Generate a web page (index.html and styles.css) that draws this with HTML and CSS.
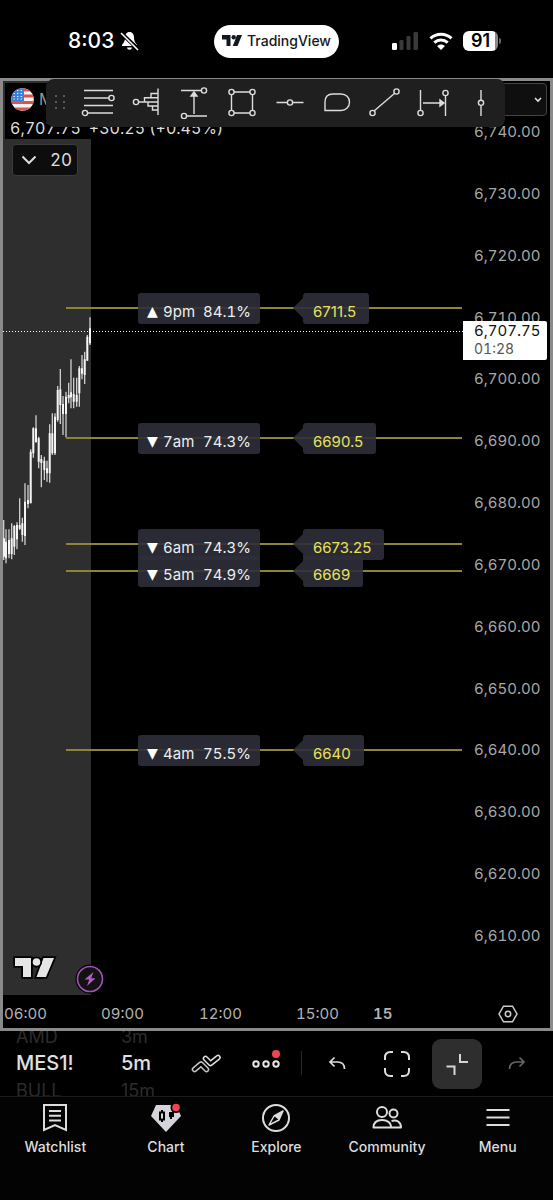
FILE: index.html
```html
<!doctype html>
<html lang="en">
<head>
<meta charset="utf-8">
<meta name="viewport" content="width=device-width, initial-scale=1">
<title>MES1! 5m</title>
<link rel="stylesheet" href="styles.css">
</head>
<body>
<header class="status">
  <div class="status-left">
    <span class="clock">8:03</span>
    <svg width="20" height="20" viewBox="0 0 20 20">
      <path fill="#fff" d="M9.500 1C6.500 1 5 3.500 5 6.500c0 3.500-1 5-3 7.200V15h15v-1.300c-2-2.200-3-3.700-3-7.200C14 3.500 12.500 1 9.500 1zM7 16.500h5c-.3 1.500-1.200 2.200-2.500 2.200S7.300 18 7 16.500z"/>
      <path stroke="#000" stroke-width="4" d="M1 2l17 16"/>
      <path stroke="#fff" stroke-width="1.600" d="M1 2l17 17"/>
    </svg>
  </div>
  <div class="island">
    <svg width="20" height="12" viewBox="0 0 20 12">
      <path fill="#131722" d="M0 0h8.500v11H4.500V4.500H0zM15 0h5l-4.500 11h-4.700z"/>
      <circle fill="#131722" cx="11.700" cy="2.300" r="2.200"/>
    </svg>
    <span>TradingView</span>
  </div>
  <div class="status-right">
    <svg width="27" height="18" viewBox="0 0 27 18">
      <rect x="0" y="11" width="5" height="7" rx="1.300" fill="#fff"/>
      <rect x="7.500" y="8" width="4" height="10" rx="1.300" fill="#3a3a3c"/>
      <rect x="14.500" y="4" width="4" height="14" rx="1.300" fill="#3a3a3c"/>
      <rect x="21.500" y="0" width="4.500" height="18" rx="1.300" fill="#3a3a3c"/>
    </svg>
    <svg width="24" height="18" viewBox="0 0 24 18" fill="none" stroke="#fff" stroke-width="3">
      <path d="M1.500 6.300c6-5.500 15-5.500 21 0"/>
      <path d="M5.300 10.700c4-3.700 9.400-3.700 13.400 0"/>
      <path fill="#fff" stroke="none" d="M12 18l-4-4c2.300-2.100 5.700-2.100 8 0z"/>
    </svg>
    <div class="battery">91</div>
  </div>
</header>

<main class="frame">
  <div class="chart">
    <section class="plot">
      <svg class="canvas" width="100%" height="100%">
        <rect class="session" x="0" y="0" width="88" height="100%"/>
        <!-- candles: wicks, then bodies -->
        <g transform="translate(-3 209) scale(.33333)" stroke="#f4f4f4">
          <path class="wick" d="M11 690V810M18 718V820M27 718V805M35 700V808M43 705V795M51 697V778M59 625V720M67 683V755M75 580V765M84 585V655M92 478V640M100 412V503M108 376V458M116 440V535M124 495V592M133 500V570M141 512V575M149 403V578M157 370V495M165 370V495M173 288V395M181 237V402M189 318V435M198 305V442M206 278V340M213 208V355M221 263V355M230 263V350M238 228V350M246 195V268M254 185V282M262 135V212M270 82V165"/>
          <path class="body" d="M12 745V800M18 755V805M27 750V792M35 745V792M43 708V770M51 705V748M59 705V716M67 700V735M75 635V738M84 630V642M92 485V640M100 415V490M108 415V456M116 445V515M124 507V519M133 512V540M141 535V550M149 430V550M157 430V490M165 380V490M173 300V390M181 298V345M189 342V372M198 320V372M206 315V325M213 307V322M221 312V335M230 315V335M238 235V310M246 235V251M254 208V255M262 140V212M270 115V160"/>
        </g>
        <path class="last" d="M0 250.500H2000"/>
      </svg>

      <div class="level" style="top:212px"><span class="tag"><i>▲</i><b>9pm</b>84.1%</span><span class="flag">6711.5</span></div>
      <div class="level" style="top:342px"><span class="tag"><i>▼</i><b>7am</b>74.3%</span><span class="flag">6690.5</span></div>
      <div class="level" style="top:448px"><span class="tag"><i>▼</i><b>6am</b>74.3%</span><span class="flag">6673.25</span></div>
      <div class="level" style="top:475px"><span class="tag"><i>▼</i><b>5am</b>74.9%</span><span class="flag">6669</span></div>
      <div class="level" style="top:654px"><span class="tag"><i>▼</i><b>4am</b>75.5%</span><span class="flag">6640</span></div>

      <div class="legend">
        <div class="symbol-row">
          <svg width="23" height="23" viewBox="0 0 23 23">
            <clipPath id="round"><circle cx="11.500" cy="11.500" r="11.300"/></clipPath>
            <g clip-path="url(#round)">
              <path fill="#f4f4f4" d="M0 0h23v23H0z"/>
              <path stroke="#e0524f" stroke-width="3" d="M0 2h23M0 8h23M0 14.500h23M0 21h23"/>
              <path fill="#3d7fd9" d="M0 0h13v13H0z"/>
              <path stroke="#fff" stroke-width="1.200" stroke-dasharray="1.200 2.400" d="M2.500 2.500h10M2.500 5.500h10M2.500 8.500h10M2.500 11h10"/>
            </g>
          </svg>
          <span>MES1!</span>
        </div>
        <div class="quote"><span>6,707.75</span><span>+30.25 (+0.45%)</span></div>
      </div>
      <button class="indicators" type="button">
        <svg width="16" height="10" viewBox="0 0 16 10" fill="none" stroke="#ddd" stroke-width="2"><path d="M1.500 1.500L8 8l6.500-6.500"/></svg>
        20
      </button>

      <svg class="tv" width="44" height="26" viewBox="0 0 44 26">
        <g fill="#e6e6e6" stroke="#000" stroke-width="3.500" paint-order="stroke">
          <path d="M2 3h16v19h-8V11H2zM30.500 3H41l-8 19h-9.500z"/>
          <circle cx="23.500" cy="7" r="3.800"/>
        </g>
      </svg>
      <svg class="bolt" width="30" height="30" viewBox="0 0 30 30">
        <circle cx="15" cy="15" r="14.500" fill="#000"/>
        <circle cx="15" cy="15" r="12.500" fill="#121212" stroke="#a052b8" stroke-width="1.600"/>
        <path fill="#b05cc8" d="M18.500 8L9.500 15.500h4.700L12 22l8.500-7.700h-4.300z"/>
      </svg>
    </section>

    <aside class="scale">
      <button class="currency" type="button" aria-label="Currency">
        <svg width="8" height="6" viewBox="0 0 8 6" fill="none" stroke="#e0e0e0" stroke-width="1.600"><path d="M1 1l3 3 3-3"/></svg>
      </button>
      <ol class="prices">
        <li>6,740.00</li><li>6,730.00</li><li>6,720.00</li><li>6,710.00</li><li>6,700.00</li>
        <li>6,690.00</li><li>6,680.00</li><li>6,670.00</li><li>6,660.00</li><li>6,650.00</li>
        <li>6,640.00</li><li>6,630.00</li><li>6,620.00</li><li>6,610.00</li>
      </ol>
      <div class="current">6,707.75<span>01:28</span></div>
    </aside>
  </div>

  <div class="times">
    <span>06:00</span><span>09:00</span><span>12:00</span><span>15:00</span><strong>15</strong>
    <button type="button" aria-label="Chart settings">
      <svg width="20" height="18" viewBox="0 0 20 18" fill="none" stroke="#ccc" stroke-width="1.500"><path d="M5.500 1.200h9L19 9l-4.500 7.800h-9L1 9z"/><circle cx="10" cy="9" r="2.700"/></svg>
    </button>
  </div>

  <div class="drawbar">
    <svg class="grip" width="12" height="16" viewBox="0 0 12 16" fill="#5a5a5a"><path d="M1 1h2v2H1zM9 1h2v2H9zM1 7h2v2H1zM9 7h2v2H9zM1 13h2v2H1zM9 13h2v2H9z"/></svg>
    <button type="button" aria-label="Fib retracement"><svg viewBox="0 0 34 34"><path d="M3 5.500h29M3 13h25M3 20.500h29M7 28h25"/><circle cx="30.500" cy="13" r="2.600"/><circle cx="4" cy="28" r="2.600"/></svg></button>
    <button type="button" aria-label="Volume profile"><svg viewBox="0 0 34 34"><path d="M29 3.500v26.500M9.500 17H29M29 8.500h-7v4.300h7M22 12.800h-6.500V17M19 17v4h10M23.500 21v4H29"/><circle cx="7" cy="17" r="2.600"/></svg></button>
    <button type="button" aria-label="Price range"><svg viewBox="0 0 34 34"><path d="M4 5.500h20.500M9.500 31H30M17 29V9"/><path class="solid" d="M17 7l-3 4h6z"/><circle cx="27" cy="5.500" r="2.600"/><circle cx="7" cy="31" r="2.600"/></svg></button>
    <button type="button" aria-label="Rectangle"><svg viewBox="0 0 34 34"><path d="M8 7h18M8 28h18M6.500 9.500v16M27.500 9.500v16"/><circle class="fill" cx="6.500" cy="7" r="2.600"/><circle class="fill" cx="27.500" cy="7" r="2.600"/><circle class="fill" cx="6.500" cy="28" r="2.600"/><circle class="fill" cx="27.500" cy="28" r="2.600"/></svg></button>
    <button type="button" aria-label="Horizontal line"><svg viewBox="0 0 34 34"><path d="M3.500 17.500h11M20 17.500h10.500"/><circle cx="17" cy="17.500" r="2.600"/></svg></button>
    <button type="button" aria-label="Callout"><svg viewBox="0 0 34 34"><path d="M5 25.500V17c0-5 3-8 8-8h8c5 0 8.500 3.500 8.500 8.200s-3.500 8.300-8.500 8.300z"/></svg></button>
    <button type="button" aria-label="Trend line"><svg viewBox="0 0 34 34"><path d="M6 26L27 8"/><circle class="fill" cx="4.500" cy="28" r="2.600"/><circle class="fill" cx="28.500" cy="6.500" r="2.600"/></svg></button>
    <button type="button" aria-label="Date range"><svg viewBox="0 0 34 34"><path d="M4.500 5v20.500M29.500 10.500V31M7 18h18"/><path class="solid" d="M28 18l-4-3v6z"/><circle cx="4.500" cy="28" r="2.600"/><circle cx="29.500" cy="8" r="2.600"/></svg></button>
    <button type="button" aria-label="Vertical line"><svg viewBox="0 0 34 34"><path d="M17 5v10M17 20.500V31"/><circle cx="17" cy="17.800" r="2.600"/></svg></button>
  </div>
</main>

<div class="tools">
  <div class="wheel symbol"><span>AMD</span><b>MES1!</b><span>BULL</span></div>
  <div class="wheel"><span>3m</span><b>5m</b><span>15m</span></div>
  <button type="button" aria-label="Chart type">
    <svg width="30" height="20" viewBox="0 0 30 20" fill="none" stroke-linecap="round" stroke-linejoin="round">
      <path stroke="#c4c4c4" stroke-width="5.600" d="M3.500 15.500l6.500-5.500 5.500 5.500"/>
      <path stroke="#000" stroke-width="2.600" d="M3.500 15.500l6.500-5.500 5.500 5.500"/>
      <path stroke="#e0e0e0" stroke-width="5.600" d="M14.500 4.500l5 5 7.500-6"/>
      <path stroke="#000" stroke-width="2.600" d="M14.500 4.500l5 5 7.500-6"/>
    </svg>
  </button>
  <button type="button" aria-label="More">
    <span class="dots"><svg width="28" height="8" viewBox="0 0 28 8" fill="none" stroke="#e6e6e6" stroke-width="2"><circle cx="4" cy="4" r="2.700"/><circle cx="14" cy="4" r="2.700"/><circle cx="24" cy="4" r="2.700"/></svg></span>
  </button>
  <div class="sep"></div>
  <button type="button" aria-label="Undo">
    <svg width="18" height="16" viewBox="0 0 18 16" fill="none" stroke="#ddd" stroke-width="1.700"><path d="M6.500 1.500L2 6l4.500 4.500M2 6h7.500C14 6 16.500 8.500 16.500 13"/></svg>
  </button>
  <button type="button" aria-label="Fullscreen">
    <svg width="28" height="28" viewBox="0 0 28 28" fill="none" stroke="#ddd" stroke-width="2"><path d="M2 10V7.500C2 4 4 2 7.500 2H10M18 2h2.500C24 2 26 4 26 7.500V10M26 18v2.500c0 3.500-2 5.500-5.500 5.500H18M10 26H7.500C4 26 2 24 2 20.500V18"/></svg>
  </button>
  <button class="active" type="button" aria-label="Collapse">
    <svg width="24" height="24" viewBox="0 0 24 24" fill="none" stroke="#d6d6d6" stroke-width="2"><path d="M15 2v8h8M1.500 14.500h8V23"/></svg>
  </button>
  <button type="button" aria-label="Redo" disabled>
    <svg width="18" height="16" viewBox="0 0 18 16" fill="none" stroke="#666" stroke-width="1.700"><path d="M11.500 1.500L16 6l-4.500 4.500M16 6H8.500C4 6 1.500 8.500 1.500 13"/></svg>
  </button>
</div>

<nav class="tabs">
  <a href="#watchlist">
    <svg width="30" height="30" viewBox="0 0 30 30" fill="none" stroke="#ddd" stroke-width="2"><path d="M4 2h22v25l-11-5-11 5zM9 8h12M9 12.700h12M9 17.500h12"/></svg>
    Watchlist
  </a>
  <a href="#chart">
    <svg width="30" height="30" viewBox="0 0 30 30">
      <path fill="#d4d4dc" d="M5 2h20l5 11-15 16L0 13z"/>
      <path fill="none" stroke="#000" stroke-width="2" d="M11 7v2.500M11 16.500V19M9 9.500h4v7H9z"/>
      <path fill="#000" d="M18 9h5v5h-2v2h-2v-2h-1z"/>
      <circle cx="25" cy="4.500" r="5.500" fill="#000"/><circle cx="25" cy="4.500" r="3.800" fill="#f04452"/>
    </svg>
    Chart
  </a>
  <a href="#explore">
    <svg width="30" height="30" viewBox="0 0 30 30" fill="none" stroke="#ddd" stroke-width="2"><circle cx="15" cy="15" r="13"/><path stroke-width="1.500" stroke-linejoin="round" d="M22 8l-4 9-10 5 5-9z"/><path fill="#ddd" stroke="none" d="M22 8l-4 9-5-4z"/></svg>
    Explore
  </a>
  <a href="#community">
    <svg width="30" height="30" viewBox="0 0 30 30" fill="none" stroke="#ddd" stroke-width="2" stroke-linejoin="round"><circle cx="10" cy="9" r="5"/><circle cx="21.500" cy="10.500" r="4"/><path d="M1.500 24.500c0-5 3.500-7.500 8.500-7.500s9 2.500 9 7.500zM19 24.500h10c0-5-3.500-8-9.500-6.500"/></svg>
    Community
  </a>
  <a href="#menu">
    <svg width="30" height="30" viewBox="0 0 30 30" stroke="#ddd" stroke-width="2"><path d="M3.500 7h23M3.500 14.500h23M3.500 22h23"/></svg>
    Menu
  </a>
</nav>
</body>
</html>
```
FILE: styles.css
```css
* {
	box-sizing: border-box;
}
body {
	margin: 0;
	min-height: 100vh;
	display: flex;
	flex-direction: column;
	background: #000;
	color: #ddd;
	font-family: Inter, "Liberation Sans", sans-serif;
	font-size: 15px;
	line-height: 20px;
}
button {
	display: flex;
	align-items: center;
	justify-content: center;
	margin: 0;
	padding: 0;
	border: 0;
	background: none;
	color: inherit;
	font: inherit;
}
svg {
	display: block;
	flex: none;
}

/* ---------- status bar ---------- */
.status {
	display: grid;
	grid-template-columns: 1fr auto 1fr;
	align-items: center;
	height: 78px;
	padding-top: 4px;
	color: #fff;
}
.status-left, .status-right {
	display: flex;
	align-items: center;
}
.status-left {
	padding-left: 68px;
	gap: 6px;
}
.clock {
	font-size: 21px;
	font-weight: 500;
}
.island {
	display: flex;
	align-items: center;
	justify-content: center;
	gap: 5px;
	width: 125px;
	height: 33px;
	border-radius: 17px;
	background: #fff;
	color: #131722;
	font-size: 14px;
	font-weight: 500;
}
.status-right {
	justify-content: flex-end;
	gap: 10px;
	padding-right: 55px;
}
.battery {
	position: relative;
	width: 35px;
	border-radius: 6px;
	background: linear-gradient(90deg, #fff 91%, #8a8a8a 91%);
	color: #000;
	font-size: 18px;
	font-weight: 600;
	text-align: center;
}
.battery::after {
	content: "";
	position: absolute;
	left: 36px;
	top: 7px;
	width: 2px;
	height: 6px;
	border-radius: 0 2px 2px 0;
	background: #666;
}

/* ---------- chart ---------- */
.frame {
	position: relative;
	flex: 1;
	display: flex;
	flex-direction: column;
	border: 3px solid #8a8a8a;
	font-variant-numeric: tabular-nums;
}
.chart {
	flex: 1;
	display: flex;
}
.plot {
	position: relative;
	flex: 1;
	overflow: hidden;
}
.canvas {
	position: absolute;
	left: 0;
	top: 0;
}
.session {
	fill: #2e2e2e;
}
.wick {
	stroke-width: 4;
	opacity: .8;
}
.body {
	stroke-width: 6;
}
.last {
	stroke: #fff;
	stroke-dasharray: 1 2;
}
.level {
	position: absolute;
	left: 63px;
	right: 1px;
	display: flex;
	height: 31px;
	line-height: 37px;
}
.level::before {
	content: "";
	position: absolute;
	left: 0;
	right: 0;
	top: 14px;
	height: 2px;
	background: #8b8534;
}
.tag, .flag {
	position: relative;
	border-radius: 3px;
	background: rgba(45, 47, 58, .9);
}
.tag {
	display: flex;
	width: 122px;
	margin-left: 72px;
	padding-left: 9px;
	color: #eee;
}
.tag i {
	width: 16px;
	font: 14px/36px "DejaVu Sans", sans-serif;
	color: #fff;
}
.tag b {
	width: 40px;
	font-weight: 400;
}
.flag {
	margin-left: 43px;
	padding: 0 13px 0 10px;
	color: #e8e15c;
	font-variant-numeric: normal;
}
.flag::before {
	content: "";
	position: absolute;
	right: 100%;
	top: 5px;
	border: 10px solid transparent;
	border-left-width: 0;
	border-right-color: rgba(45, 47, 58, .9);
}
.legend {
	position: relative;
	margin: 2px 0 0 2px;
	height: 56px;
	background: #000;
}
.symbol-row {
	display: flex;
	align-items: center;
	gap: 5px;
	height: 32px;
	padding-left: 6px;
	color: #999;
	font-size: 16px;
}
.quote {
	display: flex;
	gap: 8px;
	padding: 3px 0 0 5px;
	color: #ddd;
	font-size: 16px;
}
.indicators {
	position: relative;
	gap: 13px;
	width: 66px;
	height: 32px;
	margin: 5px 0 0 9px;
	padding-left: 3px;
	border: 1px solid #3c3c3c;
	border-radius: 4px;
	background: #0d0d0d;
	font-size: 17px;
}
.tv {
	position: absolute;
	left: 10px;
	bottom: 14px;
}
.bolt {
	position: absolute;
	left: 72px;
	bottom: 1px;
}

/* ---------- price scale ---------- */
.scale {
	position: relative;
	width: 87px;
	display: flex;
	flex-direction: column;
	padding-bottom: 49px;
	color: #a8a8a8;
}
.currency {
	width: 84px;
	height: 33px;
	margin-top: 2px;
	padding-right: 4px;
	justify-content: flex-end;
	border: 1px solid #444;
	border-radius: 4px;
	background: #0f0f0f;
}
.prices {
	flex: 1;
	display: flex;
	flex-direction: column;
	justify-content: space-between;
	list-style: none;
	margin: 6px 0 0;
	padding: 0 0 0 11px;
}
.current {
	position: absolute;
	left: 0;
	top: 240px;
	width: 84px;
	padding: 0 0 2px 11px;
	border-radius: 0 2px 2px 0;
	background: #fff;
	color: #111;
	line-height: 19px;
}
.current span {
	display: block;
	color: #555;
	font-size: 14px;
	line-height: 18px;
}
.times {
	display: grid;
	grid-template-columns: 97px 98px 97px 77px 1fr 84px;
	align-items: center;
	height: 33px;
	padding: 4px 0 0 1px;
	color: #b4b4b4;
}
.times strong {
	font-weight: 600;
}

/* ---------- floating drawing tools ---------- */
.drawbar {
	position: absolute;
	left: 43px;
	right: 45px;
	top: -2px;
	display: flex;
	align-items: center;
	height: 48px;
	padding: 0 0 2px 8px;
	border-radius: 8px;
	background: #1f1f1f;
}
.grip {
	margin-right: 8px;
}
.drawbar button {
	flex: 1;
}
.drawbar button svg {
	width: 34px;
	height: 34px;
	fill: none;
	stroke: #ddd;
	stroke-width: 1.4;
}
.drawbar svg .solid {
	fill: #ddd;
}
.drawbar svg .fill {
	fill: #1f1f1f;
}

/* ---------- bottom toolbar ---------- */
.tools {
	display: flex;
	height: 65px;
	padding: 0 6px 0 16px;
	overflow: hidden;
}
.wheel {
	display: flex;
	flex-direction: column;
	justify-content: center;
	width: 55px;
	color: #2c2c2c;
	font-size: 18px;
	line-height: 27px;
}
.wheel.symbol {
	width: 105px;
}
.wheel b {
	color: #e0e0e0;
	font-size: 20px;
	font-weight: 500;
}
.tools button {
	flex: 1;
}
.dots {
	position: relative;
}
.dots::after {
	content: "";
	position: absolute;
	right: 0;
	top: -10px;
	width: 8px;
	height: 8px;
	border-radius: 50%;
	background: #f04452;
}
.sep {
	width: 1px;
	height: 24px;
	margin: 20px 5px;
	background: #2a2a2a;
}
.tools .active {
	flex: 0 0 50px;
	align-self: center;
	height: 50px;
	margin: 0 5px;
	border-radius: 9px;
	background: #2e2e2e;
}

/* ---------- tab bar ---------- */
.tabs {
	display: flex;
	height: 104px;
	padding-top: 6px;
	border-top: 1px solid #1c1c1c;
	background: #030303;
}
.tabs a {
	flex: 1 1 0;
	display: flex;
	flex-direction: column;
	align-items: center;
	gap: 4px;
	color: #ddd;
	font-size: 14px;
	font-weight: 500;
	text-decoration: none;
}
```
